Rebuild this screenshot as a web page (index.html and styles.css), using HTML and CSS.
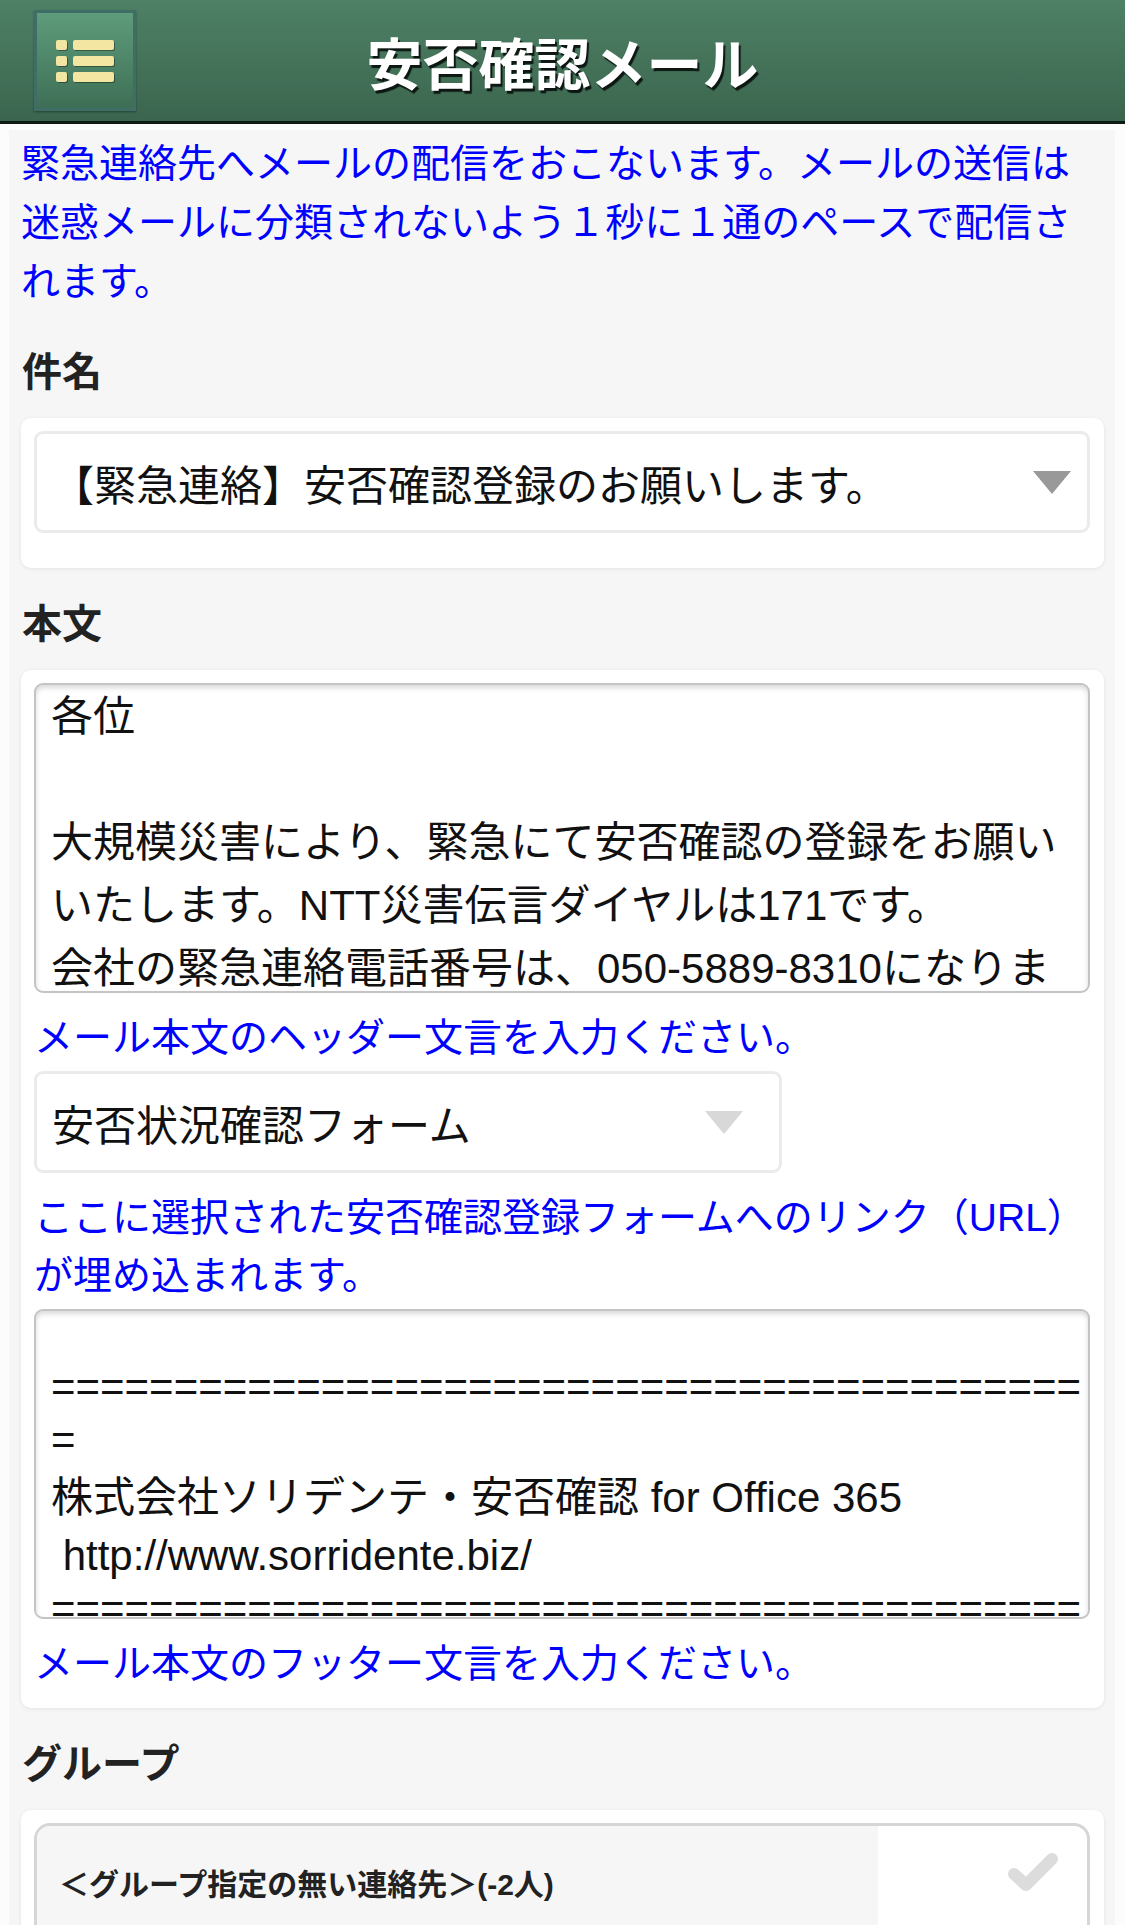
FILE: index.html
```html
<!DOCTYPE html>
<html lang="ja">
<head>
  <meta charset="UTF-8">
  <meta name="viewport" content="width=device-width, initial-scale=1.0">
  <title>安否確認メール</title>
  <link rel="stylesheet" href="styles.css">
</head>
<body>
  <header class="topbar">
    <button class="menu-btn" type="button" aria-label="メニュー">
      <svg width="58" height="42" viewBox="0 0 58 42">
        <rect x="0" y="0" width="11" height="10" rx="2"/>
        <rect x="17" y="0" width="41" height="10" rx="2"/>
        <rect x="0" y="16" width="11" height="10" rx="2"/>
        <rect x="17" y="16" width="41" height="10" rx="2"/>
        <rect x="0" y="32" width="11" height="10" rx="2"/>
        <rect x="17" y="32" width="41" height="10" rx="2"/>
      </svg>
    </button>
    <h1 class="title">安否確認メール</h1>
  </header>

  <main class="page">
    <p class="intro">緊急連絡先へメールの配信をおこないます。メールの送信は迷惑メールに分類されないよう１秒に１通のペースで配信されます。</p>

    <h2 class="label">件名</h2>
    <div class="card card-subject">
      <div class="select">
        <span class="select-text">【緊急連絡】安否確認登録のお願いします。</span>
        <span class="arrow"></span>
      </div>
    </div>

    <h2 class="label">本文</h2>
    <div class="card">
      <div class="textarea textarea-header"><div class="textarea-body">各位
　
大規模災害により、緊急にて安否確認の登録をお願い
いたします。NTT災害伝言ダイヤルは171です。
会社の緊急連絡電話番号は、050-5889-8310になりま
す。</div></div>
      <p class="hint">メール本文のヘッダー文言を入力ください。</p>
      <div class="select select-form">
        <span class="select-text">安否状況確認フォーム</span>
        <span class="arrow arrow-light"></span>
      </div>
      <p class="hint"><span class="nowrap">ここに選択された安否確認登録フォームへのリンク（URL）</span><br>が埋め込まれます。</p>
      <div class="textarea textarea-footer"><div class="textarea-body">
==========================================
=
<span class="cjk-line">株式会社ソリデンテ・安否確認 for Office 365</span>
 http://www.sorridente.biz/
==========================================</div></div>
      <p class="hint">メール本文のフッター文言を入力ください。</p>
    </div>

    <h2 class="label">グループ</h2>
    <div class="card">
      <div class="group-list">
        <div class="group-row">
          <span class="group-name">＜グループ指定の無い連絡先＞(-2人)</span>
          <span class="group-check">
            <svg width="56" height="44" viewBox="0 0 56 44">
              <path d="M9 24 L21 35 L47 9" fill="none" stroke="#dcdcdc" stroke-width="12" stroke-linecap="round" stroke-linejoin="round"/>
            </svg>
          </span>
        </div>
      </div>
    </div>
  </main>
</body>
</html>
```

FILE: styles.css
```css
html, body {
  margin: 0;
  padding: 0;
  background: #fcfcfc;
  font-family: 'Liberation Sans', 'Noto Sans CJK JP', sans-serif;
  color: #111;
}

.topbar {
  display: grid;
  grid-template-columns: 1fr auto 1fr;
  align-items: center;
  height: 121px;
  background: linear-gradient(#4e8166, #3b654e);
  border-bottom: 3px solid #0e1a12;
}

.menu-btn {
  justify-self: start;
  margin-left: 34px;
  width: 102px;
  height: 101px;
  padding: 0;
  border: 3px solid #3f6e66;
  background: linear-gradient(#5e9c7b, #3e6f56);
  box-shadow: 0 1px 2px rgba(0, 0, 0, 0.35);
  display: flex;
  align-items: center;
  justify-content: center;
}

.menu-btn svg {
  fill: #f3e6a2;
  filter: drop-shadow(1px 1px 0 rgba(0, 0, 0, 0.35));
}

.title {
  margin: 0;
  font-size: 56px;
  font-weight: 700;
  color: #fff;
  text-shadow: 2px 3px 1px rgba(0, 0, 0, 0.8);
}

.page {
  margin: 6px 10px 0 9px;
  padding: 4px 11px 0 12px;
  background: #f6f6f7;
  min-height: 1800px;
}

.intro {
  margin: 0;
  padding-bottom: 5px;
  font-size: 39px;
  line-height: 59px;
  color: #0000ff;
}

.label {
  margin: 26px 0 16px 1px;
  font-size: 40px;
  line-height: 60px;
  font-weight: 700;
  color: #222;
}

.card {
  background: #fff;
  border-radius: 10px;
  box-shadow: 0 1px 4px rgba(0, 0, 0, 0.08);
  padding: 13px 14px 11px 13px;
}

.card-subject .select {
  margin-bottom: 24px;
}

.select {
  display: flex;
  align-items: center;
  justify-content: space-between;
  box-sizing: border-box;
  height: 102px;
  padding: 0 16px 0 15px;
  border: 3px solid #ebebeb;
  border-radius: 9px;
  background: #fff;
  font-size: 42px;
}

.select-form {
  width: 748px;
  padding-right: 36px;
}

.arrow {
  width: 0;
  height: 0;
  border-left: 19px solid transparent;
  border-right: 19px solid transparent;
  border-top: 23px solid #999;
}

.arrow-light {
  border-top-color: #d8d8d8;
}

.textarea {
  box-sizing: border-box;
  height: 310px;
  padding: 0 6px 0 15px;
  border: 2px solid #c4c4c4;
  border-radius: 9px;
  box-shadow: inset 0 3px 5px rgba(0, 0, 0, 0.15);
  font-size: 42px;
  white-space: pre;
  overflow: hidden;
}

.textarea-header {
  line-height: 63px;
}

.textarea-footer {
  line-height: 53px;
}

.textarea-footer .textarea-body {
  margin-top: -4px;
}

.cjk-line {
  line-height: 63px;
}

.hint {
  margin: 16px 0 4px;
  font-size: 39px;
  line-height: 58px;
  color: #0000ff;
}

.nowrap {
  white-space: nowrap;
}

.group-list {
  border: 3px solid #d6d6d6;
  border-radius: 16px;
  overflow: hidden;
}

.group-row {
  display: flex;
  height: 120px;
}

.group-name {
  width: 841px;
  box-sizing: border-box;
  padding: 39px 0 0 22px;
  background: #f6f6f6;
  font-size: 30px;
  line-height: 40px;
  font-weight: 700;
  color: #222;
}

.group-check {
  flex: 1;
  display: flex;
  justify-content: flex-end;
  padding: 24px 26px 0 0;
}
```
